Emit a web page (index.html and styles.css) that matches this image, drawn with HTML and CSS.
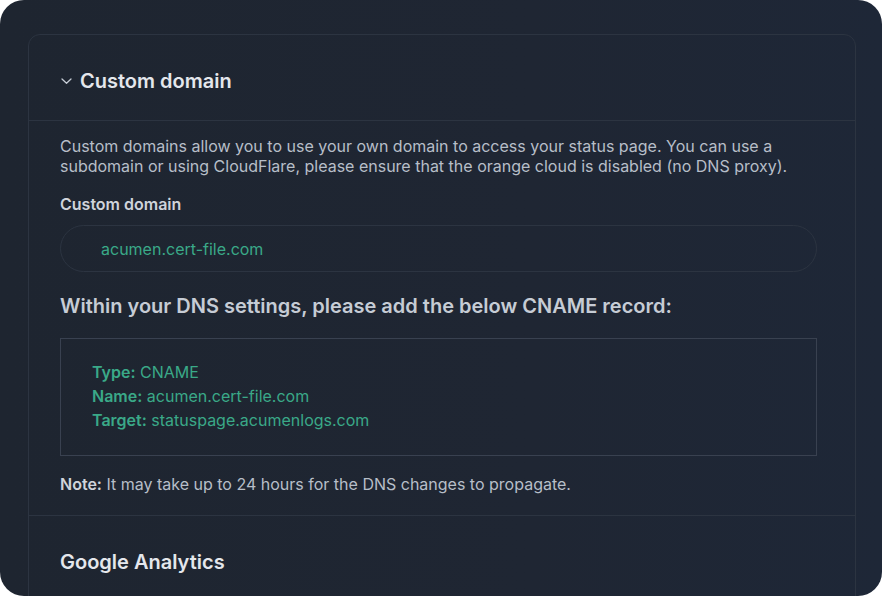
FILE: index.html
```html
<!DOCTYPE html>
<html>
<head>
<meta charset="utf-8">
<link rel="stylesheet" href="styles.css">
</head>
<body>
<div class="frame">
  <div class="card">
    <div class="card-head">
      <svg class="chev" width="13" height="12" viewBox="0 0 13 12"><path d="M2 4 L6.5 8.2 L11 4" fill="none" stroke="#c4cad3" stroke-width="1.3" stroke-linecap="round" stroke-linejoin="round"/></svg>
      <h2 class="title">Custom domain</h2>
    </div>
    <div class="card-body">
      <p class="desc">Custom domains allow you to use your own domain to access your status page. You can use a subdomain or using CloudFlare, please ensure that the orange cloud is disabled (no DNS proxy).</p>
      <label class="label">Custom domain</label>
      <div class="input">acumen.cert-file.com</div>
      <h3 class="dns-title">Within your DNS settings, please add the below CNAME record:</h3>
      <div class="record">
        <div><b>Type:</b> CNAME</div>
        <div><b>Name:</b> acumen.cert-file.com</div>
        <div><b>Target:</b> statuspage.acumenlogs.com</div>
      </div>
      <p class="note"><b>Note:</b> It may take up to 24 hours for the DNS changes to propagate.</p>
    </div>
    <div class="section">
      <h2 class="title">Google Analytics</h2>
    </div>
  </div>
</div>
</body>
</html>
```
FILE: styles.css
```css
html, body {
  margin: 0;
  padding: 0;
  background: #ffffff;
}
body {
  font-family: Inter, "Noto Sans", sans-serif;
}
.frame {
  width: 882px;
  height: 596px;
  box-sizing: border-box;
  border-radius: 24px;
  background: linear-gradient(90deg, #1e2530 0%, #1f2633 60%, #1e2737 100%);
  padding: 34px 26px 0 28px;
  overflow: hidden;
}
.card {
  border: 1px solid #2c3441;
  border-radius: 12px;
  height: 640px;
  box-sizing: border-box;
}
.card-head {
  display: flex;
  align-items: center;
  gap: 7px;
  height: 86px;
  box-sizing: border-box;
  padding: 6px 0 0 31px;
  border-bottom: 1px solid #2c3441;
}
.chev {
  margin-top: 1px;
}
.title {
  margin: 0;
  font-size: 20px;
  font-weight: 600;
  color: #e4e7ec;
  letter-spacing: 0;
}
.card-body {
  padding: 15px 38px 21px 31px;
  border-bottom: 1px solid #2c3441;
}
.desc {
  margin: 0;
  font-size: 16px;
  line-height: 20px;
  color: #b7bec8;
}
.label {
  display: block;
  margin-top: 18px;
  font-size: 16px;
  font-weight: 600;
  color: #cfd4db;
  line-height: 20px;
}
.input {
  margin-top: 11px;
  height: 47px;
  box-sizing: border-box;
  border: 1px solid #2c3441;
  border-radius: 24px;
  padding: 0 40px;
  display: flex;
  align-items: center;
  font-size: 16px;
  color: #3aa988;
}
.dns-title {
  margin: 20px 0 0;
  font-size: 20px;
  font-weight: 600;
  line-height: 28px;
  color: #c6ccd5;
}
.record {
  margin-top: 18px;
  border: 1px solid #394150;
  padding: 21px 31px 23px;
  font-size: 16px;
  line-height: 24px;
  color: #3aa988;
}
.record b {
  font-weight: 600;
}
.note {
  margin: 18px 0 0;
  font-size: 16px;
  line-height: 20px;
  color: #b7bec8;
}
.note b {
  font-weight: 600;
  color: #cfd4db;
}
.section {
  padding: 34px 31px;
}
```
